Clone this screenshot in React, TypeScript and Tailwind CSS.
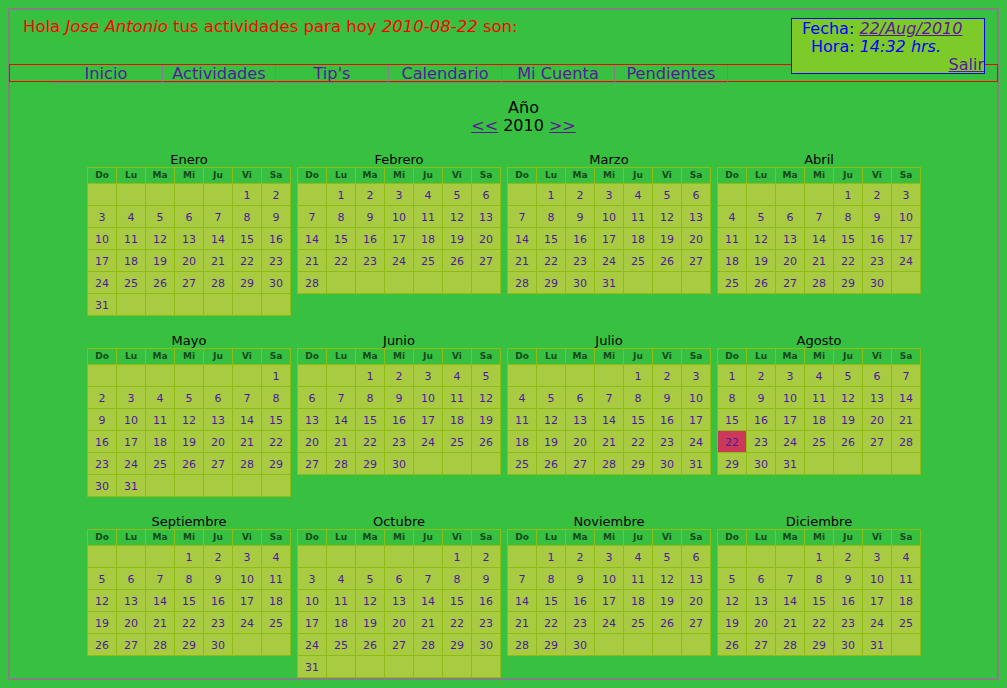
const MONTHS: [string, number, number][] = [
  ['Enero', 5, 31],
  ['Febrero', 1, 28],
  ['Marzo', 1, 31],
  ['Abril', 4, 30],
  ['Mayo', 6, 31],
  ['Junio', 2, 30],
  ['Julio', 4, 31],
  ['Agosto', 0, 31],
  ['Septiembre', 3, 30],
  ['Octubre', 5, 31],
  ['Noviembre', 1, 30],
  ['Diciembre', 3, 31],
];

const DAYS = ['Do', 'Lu', 'Ma', 'Mi', 'Ju', 'Vi', 'Sa'];
const NAV = ['Inicio', 'Actividades', "Tip's", 'Calendario', 'Mi Cuenta', 'Pendientes'];

const Month = ({ name, start, total }: { name: string; start: number; total: number }) => {
  const cells: (number | null)[] = [];
  for (let i = 0; i < start; i++) cells.push(null);
  for (let d = 1; d <= total; d++) cells.push(d);
  while (cells.length % 7 !== 0) cells.push(null);

  return (
    <div className="w-[204px]">
      <div className="h-[15px] text-center text-[13px] leading-[15px] text-black">{name}</div>
      <div className="grid grid-cols-[repeat(7,29px)] border-t border-l border-[#8fbb14] w-[204px]">
        {DAYS.map((d) => (
          <div
            key={d}
            className="h-4 border-r border-b border-[#8fbb14] text-center text-[9px] leading-[15px] font-bold text-[#14491c]"
          >
            {d}
          </div>
        ))}
        {cells.map((d, i) => (
          <div
            key={i}
            className={`h-[22px] border-r border-b border-[#8fbb14] text-center text-[11px] leading-[23px] text-[#4b1aa0] ${
              name === 'Agosto' && d === 22 ? 'bg-[#cc3858]' : 'bg-[#a8cb42]'
            }`}
          >
            {d}
          </div>
        ))}
      </div>
    </div>
  );
};

export default function App() {
  return (
    <div className="relative h-[688px] w-[1007px] overflow-hidden bg-[#38c040] pt-2 pl-2 font-['DejaVu_Sans',sans-serif]">
      <div className="h-[672px] w-[991px] border-2 border-[#808080]">
        <div className="h-[54px] pt-[7px] pl-[13px] text-[16.5px] leading-5 text-[#ff0000]">
          Hola <i>Jose Antonio</i> tus actividades para hoy <i>2010-08-22</i> son:
        </div>
        <ul className="-ml-px flex h-[18px] w-[989px] border border-[#ff0000] pl-[40px] text-[16.2px] leading-[17px] text-[#5a189a]">
          {NAV.map((n) => (
            <li key={n} className="h-[18px] w-[113px] border-r border-b border-[#808080] text-center">
              {n}
            </li>
          ))}
        </ul>
        <div className="pt-[17px] pl-[40px] text-center text-[16px] leading-[18px] text-black">
          <div>Año</div>
          <div>
            <a className="text-[#5a189a] underline">&lt;&lt;</a> 2010{' '}
            <a className="text-[#5a189a] underline">&gt;&gt;</a>
          </div>
        </div>
        <div className="ml-[77px] mt-[17px] grid grid-cols-[repeat(4,204px)] gap-x-1.5 items-start auto-rows-[181px]">
          {MONTHS.map(([name, start, total]) => (
            <Month key={name} name={name} start={start} total={total} />
          ))}
        </div>
      </div>

      <div className="absolute top-[18px] left-[791px] h-14 w-[194px] border border-[#0000ff] bg-[#7ccb28] text-[16px] leading-[18px] text-[#0000ff]">
        <div className="pl-2.5 pt-px">
          Fecha: <a className="italic text-[#5a189a] underline">22/Aug/2010</a>
        </div>
        <div className="pl-[19px]">
          Hora: <i>14:32 hrs.</i>
        </div>
        <div className="text-right">
          <a className="text-[#5a189a] underline">Salir</a>
        </div>
      </div>
    </div>
  );
}
